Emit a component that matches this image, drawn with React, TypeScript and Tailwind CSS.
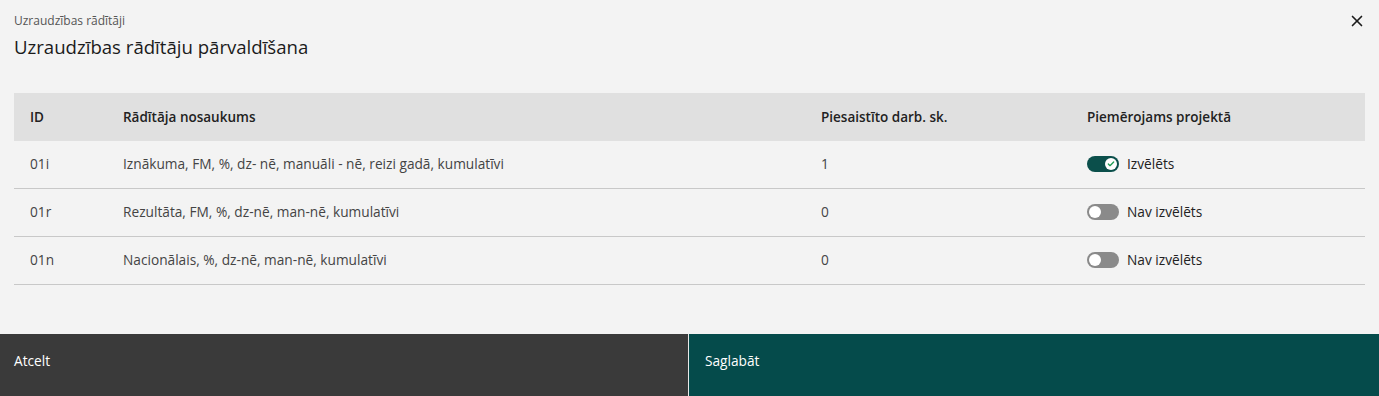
import { X, Check } from 'lucide-react'

const rows = [
  { id: '01i', name: 'Iznākuma, FM, %, dz- nē, manuāli - nē, reizi gadā, kumulatīvi', count: 1, on: true },
  { id: '01r', name: 'Rezultāta, FM, %, dz-nē, man-nē, kumulatīvi', count: 0, on: false },
  { id: '01n', name: 'Nacionālais, %, dz-nē, man-nē, kumulatīvi', count: 0, on: false },
]

function Toggle({ on }: { on: boolean }) {
  return (
    <span
      className={
        on
          ? 'flex items-center justify-end w-8 h-4 rounded-full bg-[#0b4f4b] px-[2px]'
          : 'flex items-center justify-start w-8 h-4 rounded-full bg-[#8a8a8a] px-[2px]'
      }
    >
      <span className="w-3 h-3 rounded-full bg-white flex items-center justify-center">
        {on && <Check size={8} strokeWidth={4} className="text-[#1f9d55]" />}
      </span>
    </span>
  )
}

export default function App() {
  return (
    <div className="w-[1379px] h-[396px] bg-[#f3f3f3] flex flex-col font-['Segoe_UI','Open_Sans',sans-serif] text-[#222]">
      {/* header */}
      <div className="flex justify-between px-[14px] pt-[12px]">
        <div>
          <p className="text-[12px] leading-[18px] text-[#555]">Uzraudzības rādītāji</p>
          <h1 className="text-[18.6px] leading-[28px] mt-[3px] text-[#1b1b1b]">Uzraudzības rādītāju pārvaldīšana</h1>
        </div>
        <button className="h-[20px] mt-[-1px] mr-[-1px] text-[#1b1b1b]">
          <X size={18} strokeWidth={2.2} />
        </button>
      </div>

      {/* table */}
      <div className="px-[14px] mt-[32px] flex-1">
        <div className="grid grid-cols-[93px_698px_266px_1fr] h-[48px] items-center bg-[#e0e0e0] text-[13.5px] font-semibold">
          <span className="pl-[16px]">ID</span>
          <span className="pl-[16px]">Rādītāja nosaukums</span>
          <span className="pl-[16px]">Piesaistīto darb. sk.</span>
          <span className="pl-[16px]">Piemērojams projektā</span>
        </div>
        {rows.map(r => (
          <div
            key={r.id}
            className="grid grid-cols-[93px_698px_266px_1fr] h-[48px] items-center border-b border-[#c8c8c8] text-[13.7px] text-[#444]"
          >
            <span className="pl-[16px]">{r.id}</span>
            <span className="pl-[16px]">{r.name}</span>
            <span className="pl-[16px]">{r.count}</span>
            <span className="pl-[16px] flex items-center gap-[8px] text-[#222]">
              <Toggle on={r.on} />
              {r.on ? 'Izvēlēts' : 'Nav izvēlēts'}
            </span>
          </div>
        ))}
      </div>

      {/* footer */}
      <div className="flex h-[62px] text-white text-[13.7px] font-medium">
        <button className="w-[688px] bg-[#3a3a3a] text-left px-[14px] pb-[8px]">Atcelt</button>
        <div className="w-px bg-[#e8e8e8]" />
        <button className="flex-1 bg-[#054b4b] text-left px-[16px] pb-[8px]">Saglabāt</button>
      </div>
    </div>
  )
}
